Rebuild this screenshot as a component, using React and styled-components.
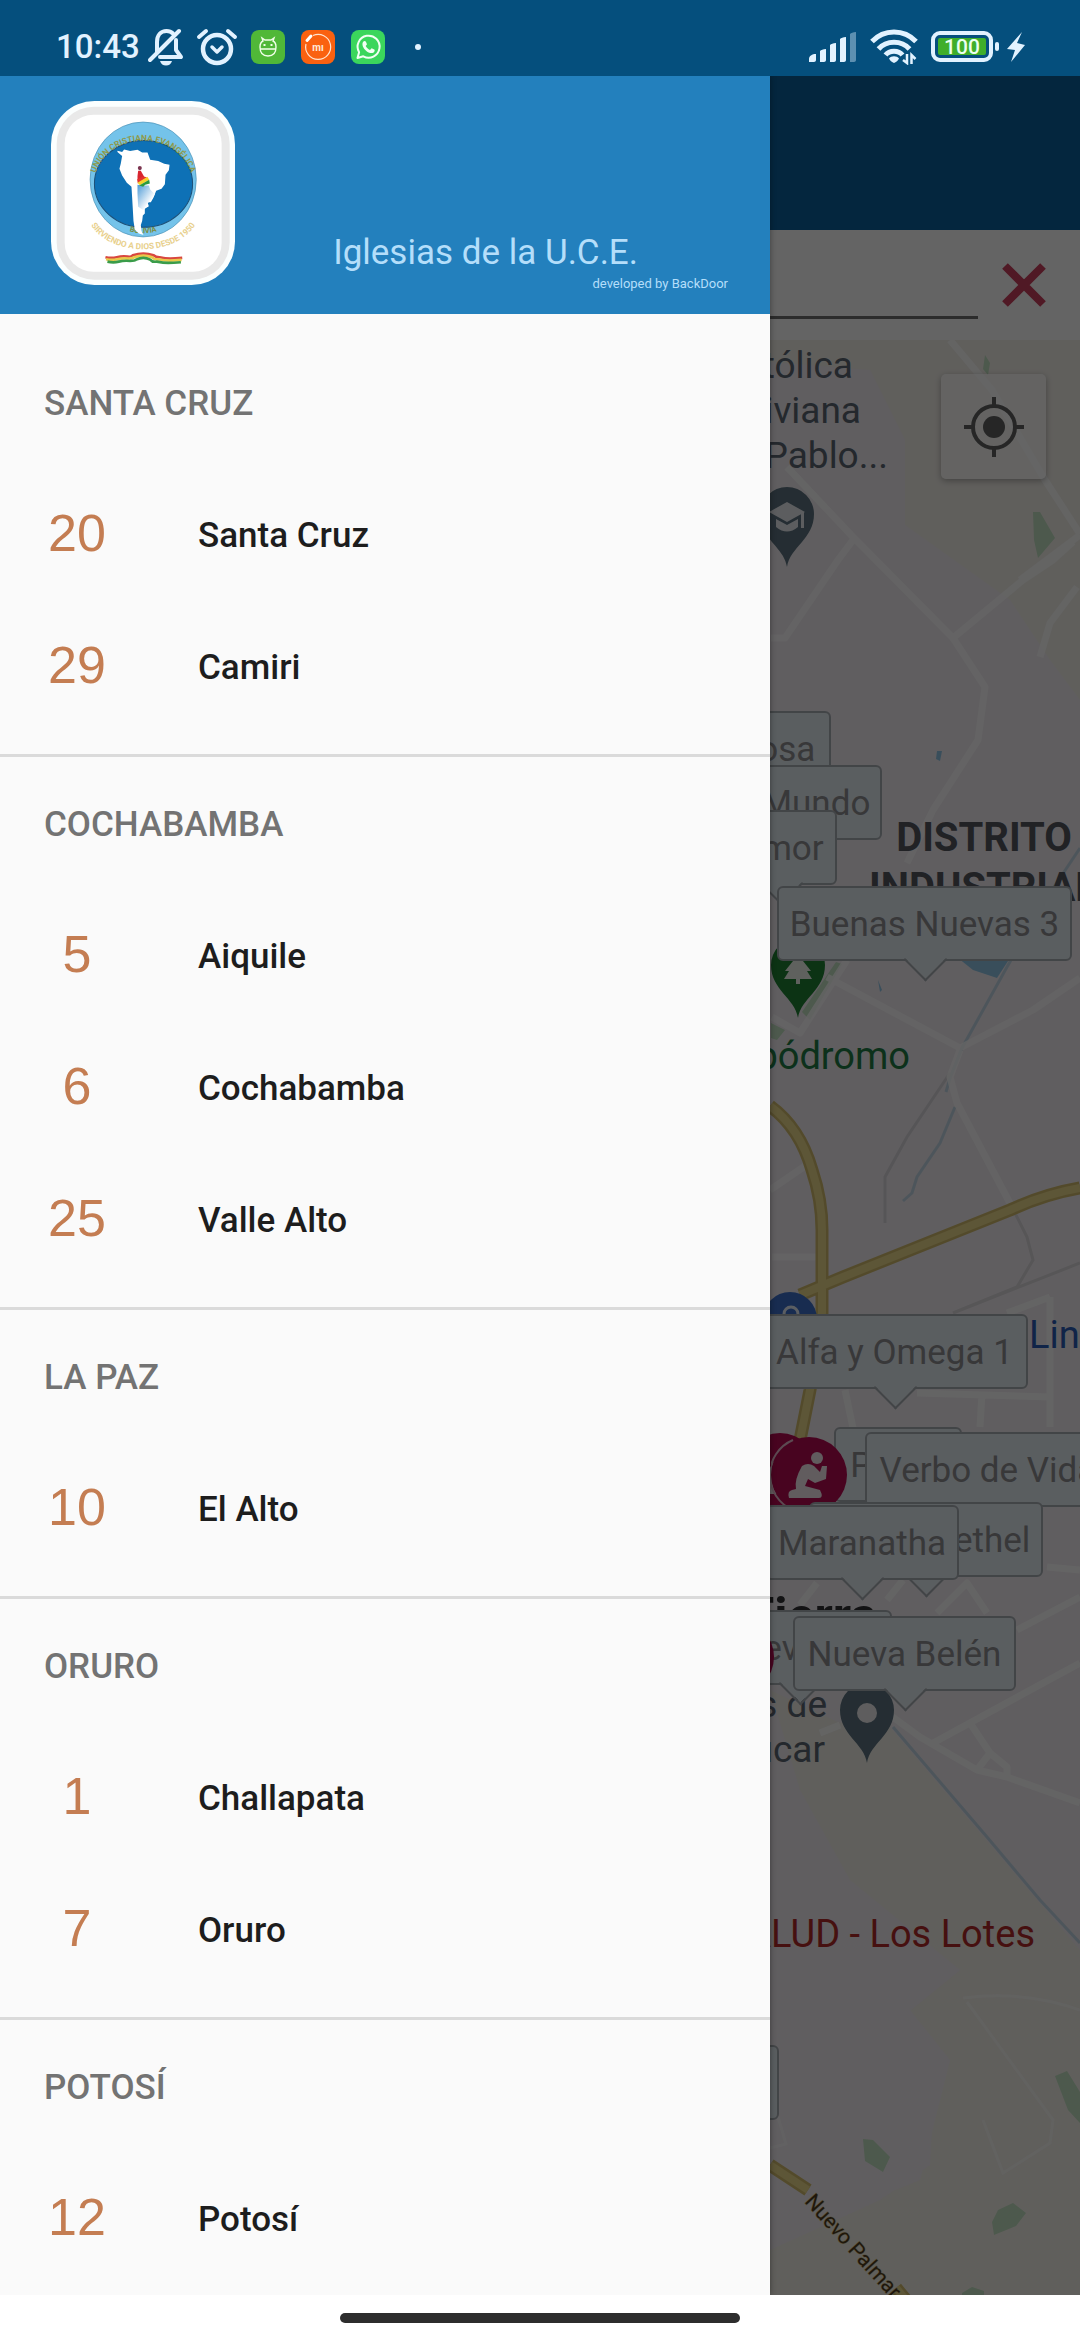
import React from "react";
import styled, { createGlobalStyle } from "styled-components";

const GlobalStyle = createGlobalStyle`
  * {
    box-sizing: border-box;
  }

  body {
    margin: 0;
    background: #ffffff;
    font-family: Roboto, "Liberation Sans", sans-serif;
  }
`;

const Screen = styled.div`
  display: flex;
  flex-direction: column;
  height: 100vh;
  overflow: hidden;
`;

/* ---------- status bar ---------- */

const StatusBar = styled.header`
  display: flex;
  justify-content: space-between;
  flex-shrink: 0;
  height: 76px;
  padding: 18px 55px 0 56px;
  background: #054f7d;
  color: #e2f2ff;
`;

const StatusGroup = styled.div`
  display: flex;
  align-items: center;
  gap: ${(props) => props.$gap}px;
`;

const Clock = styled.time`
  font-size: 33px;
  font-weight: 500;
  line-height: 40px;
`;

/* ---------- layout below the status bar ---------- */

const Stage = styled.div`
  display: grid;
  grid-template: minmax(0, 1fr) / minmax(0, 1fr);
  flex: 1;
  min-height: 0;
  overflow: hidden;

  > * {
    grid-area: 1 / 1;
  }
`;

const MapScreen = styled.main`
  display: flex;
  flex-direction: column;
  min-height: 0;
`;

const AppBar = styled.div`
  flex-shrink: 0;
  height: 154px;
  background: #0c5f9c;
`;

const SearchRow = styled.form`
  display: flex;
  align-items: center;
  flex-shrink: 0;
  gap: 18px;
  height: 110px;
  padding: 0 28px 0 44px;
  background: #fafafa;
`;

const SearchInput = styled.input`
  flex: 1;
  min-width: 0;
  height: 66px;
  padding: 0;
  border: 0;
  border-bottom: 3px solid #6e6e6e;
  margin-top: 2px;
  background: transparent;
  font: 400 40px Roboto, sans-serif;
`;

const ClearButton = styled.button`
  display: flex;
  align-items: center;
  justify-content: center;
  width: 56px;
  height: 56px;
  padding: 0;
  border: 0;
  background: transparent;
`;

const MapArea = styled.section`
  position: relative;
  flex: 1;
  min-height: 0;
  overflow: hidden;
  background: #f0ebf0;
`;

const MapDrawing = styled.svg`
  display: block;
  width: 1080px;
  height: 1955px;
  font-family: Roboto, sans-serif;
`;

const MarkerLabel = styled.div`
  position: absolute;
  left: ${(props) => props.$x}px;
  top: ${(props) => props.$y}px;
  width: ${(props) => props.$w}px;
  height: 75px;
  border: 2px solid #a6acb2;
  border-radius: 6px;
  background: #e2eaf0;
  color: #8c8c90;
  font-size: 35px;
  line-height: 74px;
  text-align: center;
  white-space: nowrap;

  &::after {
    content: "";
    position: absolute;
    left: calc(50% - 15px);
    bottom: -16px;
    width: 29px;
    height: 29px;
    border: solid #a6acb2;
    border-width: 0 2px 2px 0;
    background: linear-gradient(135deg, transparent 50%, #e2eaf0 50%);
    transform: rotate(45deg);
  }
`;

const ChurchPin = styled.svg`
  position: absolute;
  left: ${(props) => props.$x}px;
  top: ${(props) => props.$y}px;
  width: 76px;
  height: 76px;
`;

const LocateButton = styled.button`
  position: absolute;
  top: 34px;
  right: 34px;
  display: flex;
  align-items: center;
  justify-content: center;
  width: 105px;
  height: 105px;
  padding: 0;
  border: 0;
  border-radius: 5px;
  background: rgba(255, 255, 255, 0.6);
  box-shadow: 0 2px 6px rgba(0, 0, 0, 0.3);
`;

const Scrim = styled.div`
  z-index: 1;
  background: rgba(0, 0, 0, 0.6);
`;

/* ---------- drawer ---------- */

const Drawer = styled.aside`
  z-index: 2;
  display: flex;
  flex-direction: column;
  width: 770px;
  max-width: 85%;
  min-height: 0;
  background: #fafafa;
  box-shadow: 0 0 6px rgba(0, 0, 0, 0.4);
`;

const DrawerHeader = styled.div`
  display: flex;
  align-items: flex-end;
  justify-content: space-between;
  flex-shrink: 0;
  height: 238px;
  padding: 25px 42px 22px 51px;
  background: #2380bd;
`;

const Logo = styled.svg`
  align-self: flex-start;
  width: 184px;
  height: 184px;
`;

const HeaderText = styled.div`
  display: flex;
  flex-direction: column;
  gap: 3px;
`;

const Title = styled.h1`
  margin: 0 90px 0 0;
  color: #b4defa;
  font-size: 35px;
  font-weight: 400;
  line-height: 40px;
`;

const Credit = styled.p`
  margin: 0;
  color: #b4defa;
  font-size: 13px;
  line-height: 16px;
  text-align: right;
`;

const DrawerNav = styled.nav`
  flex: 1;
  min-height: 0;
  overflow-y: auto;
  scrollbar-width: none;
`;

const Section = styled.section`
  padding-bottom: 22px;

  &:first-child {
    padding-top: 22px;
  }

  & + & {
    border-top: 3px solid #dadada;
  }
`;

const SectionTitle = styled.h2`
  margin: 0;
  padding: 4px 44px 0;
  color: #737373;
  font-size: 35px;
  font-weight: 500;
  line-height: 128px;
`;

const List = styled.ul`
  margin: 0;
  padding: 0;
  list-style: none;
`;

const Item = styled.a`
  display: flex;
  align-items: center;
  gap: 88px;
  height: 132px;
  padding: 2px 44px 0;
  color: #1d1d1d;
  font-size: 35px;
  font-weight: 500;
  text-decoration: none;
`;

const Count = styled.span`
  width: 66px;
  padding-bottom: 4px;
  color: #c47d52;
  font: 400 52px/64px "Liberation Sans", sans-serif;
  text-align: center;
`;

/* ---------- bottom gesture bar ---------- */

const GestureBar = styled.footer`
  display: flex;
  align-items: center;
  justify-content: center;
  flex-shrink: 0;
  height: 45px;
  background: #ffffff;
`;

const GesturePill = styled.div`
  width: 37%;
  height: 10px;
  border-radius: 5px;
  background: #2d2d2d;
`;

const departments = [
  {
    name: "SANTA CRUZ",
    places: [
      { count: 20, name: "Santa Cruz" },
      { count: 29, name: "Camiri" },
    ],
  },
  {
    name: "COCHABAMBA",
    places: [
      { count: 5, name: "Aiquile" },
      { count: 6, name: "Cochabamba" },
      { count: 25, name: "Valle Alto" },
    ],
  },
  { name: "LA PAZ", places: [{ count: 10, name: "El Alto" }] },
  {
    name: "ORURO",
    places: [
      { count: 1, name: "Challapata" },
      { count: 7, name: "Oruro" },
    ],
  },
  { name: "POTOSÍ", places: [{ count: 12, name: "Potosí" }] },
];

// x, y and w are in map pixels; later entries lie on top
const backMarkers = [
  { name: "Rosa", x: 721, y: 371, w: 110 },
  { name: "Luz del Mundo", x: 631, y: 425, w: 251 },
  { name: "Amor", x: 725, y: 470, w: 112 },
  { name: "Peniel", x: 834, y: 1087, w: 128 },
  { name: "Nueva Luz", x: 708, y: 1270, w: 184 },
  { name: "Sion", x: 677, y: 1705, w: 102 },
];

const pins = [
  { id: "pin-south", x: 698, y: 1279 },
  { id: "pin-west", x: 742, y: 1093 },
  { id: "pin-east", x: 771, y: 1097 },
];

const frontMarkers = [
  { name: "Buenas Nuevas 3", x: 777, y: 546, w: 295 },
  { name: "Alfa y Omega 1", x: 761, y: 974, w: 267 },
  { name: "Verbo de Vida", x: 865, y: 1092, w: 246 },
  { name: "Iglesia Bethel", x: 809, y: 1162, w: 234 },
  { name: "Maranatha", x: 765, y: 1165, w: 194 },
  { name: "Nueva Belén", x: 793, y: 1276, w: 223 },
];

const BellOffIcon = () => (
  <svg width="36" height="38" viewBox="0 0 36 38" fill="none" stroke="currentColor" strokeWidth="4">
    <path d="M9 24V14C9 7 13 3 18.500 3c3 0 5 1 6.500 2.500M28 12v10l5 7H12" strokeLinejoin="round" strokeLinecap="round" />
    <path d="M2 32 31 3" strokeLinecap="round" />
    <path d="M12 33h12c-1 3-3 4.500-6 4.500S13 36 12 33z" fill="currentColor" stroke="none" />
  </svg>
);

const AlarmIcon = () => (
  <svg width="42" height="38" viewBox="0 0 42 38" fill="none" stroke="currentColor" strokeLinecap="round">
    <circle cx="21" cy="21" r="14" strokeWidth="4.500" />
    <path d="M16 19l5 5 5-5" strokeWidth="3.500" strokeLinejoin="round" />
    <path d="M3 9l7-6M39 9l-7-6" strokeWidth="4" />
  </svg>
);

const BugAppIcon = () => (
  <svg width="34" height="34" viewBox="0 0 34 34">
    <rect width="34" height="34" rx="8" fill="#50b838" />
    <g fill="none" stroke="#f0ffe8" strokeWidth="1.400">
      <path d="M9 17c0-3 1-5 3-6l-1-3 3 2h6l3-2-1 3c2 1 3 3 3 6 0 6-3 9-8 9s-8-3-8-9zM9 19h16" />
      <path d="M13.500 14v2M20.500 14v2" strokeWidth="2" />
    </g>
  </svg>
);

const MiAppIcon = () => (
  <svg width="34" height="34" viewBox="0 0 34 34">
    <rect width="34" height="34" rx="8" fill="#fa6110" />
    <path d="M12 5.500A12.500 12.500 0 1 1 5 14" fill="none" stroke="#ffe3cf" strokeWidth="1.200" />
    <path d="M6 10.500l4-4.500" stroke="#ffffff" strokeWidth="3" strokeLinecap="round" />
    <text x="17" y="20.500" fill="#ffe9d8" fontFamily="Roboto, sans-serif" fontSize="10" fontWeight="700" textAnchor="middle">
      mı
    </text>
  </svg>
);

const ChatAppIcon = () => (
  <svg width="34" height="34" viewBox="0 0 34 34">
    <rect width="34" height="34" rx="8" fill="#3bd65c" />
    <path d="M6.500 28l1.600-5.800A11 11 0 1 1 12.300 26.300z" fill="none" stroke="#f2fff4" strokeWidth="2" strokeLinejoin="round" />
    <path d="M12 12c1-1.500 2.500-1.500 3 0l1 2.200-1.300 1.800c1 1.800 2.300 3 4.300 3.900l1.600-1.700 2.700 1.300c.8.500.3 2.500-1 3.200-2 1-5 .2-7.500-2.200-2.800-2.600-4.200-6-2.800-8.500z" fill="#f2fff4" />
  </svg>
);

const SignalIcon = () => (
  <svg width="48" height="32" viewBox="0 0 48 32" fill="currentColor">
    <path d="M0 31v-3c0-3 3-5 7-5v6c0 1-1 2-2 2zM11 20c1-1 3-2 6-2v11c0 1-1 2-2 2h-4zM21 14c1-1 3-2 6-2v17c0 1-1 2-2 2h-4zM31 8c1-1 3-2 6-2v23c0 1-1 2-2 2h-4z" />
    <path d="M41 3c1-1 3-2 6-2v28c0 1-1 2-2 2h-4z" opacity="0.4" />
  </svg>
);

const WifiIcon = () => (
  <svg width="48" height="36" viewBox="0 0 48 36" fill="none" stroke="currentColor" strokeWidth="5">
    <path d="M2 12.500C14-.2 34-.2 46 12.500M8.500 20c8-9 23-9 31 0M15.500 26c4-5 13-5 17 0" />
    <path d="M24 34c-3-1-4-3-5-4.500 2-3 8-3 10 0-1 1.500-2 3.500-5 4.500z" fill="currentColor" stroke="none" />
    <path d="M37 25v9l-4-3M41.500 35v-9l4 4" strokeWidth="2.500" />
  </svg>
);

const BatteryIcon = () => (
  <svg width="70" height="32" viewBox="0 0 70 32">
    <rect x="2" y="2" width="58" height="27" rx="7" fill="none" stroke="currentColor" strokeWidth="4" />
    <rect x="7" y="7" width="48" height="17" rx="2" fill="#3fae2a" />
    <rect x="64" y="11" width="4" height="9" rx="2" fill="currentColor" />
    <text x="31" y="23" fill="#eafff0" fontFamily="Roboto, sans-serif" fontSize="21" fontWeight="500" textAnchor="middle">
      100
    </text>
  </svg>
);

const BoltIcon = () => (
  <svg width="18" height="30" viewBox="0 0 18 30" fill="currentColor">
    <path d="M15 0L0 17l8 1L4 30 18 13l-8-2z" />
  </svg>
);

const ChurchLogo = () => (
  <Logo viewBox="33 33 551 551" role="img" aria-label="Unión Cristiana Evangélica">
    <defs>
      <linearGradient id="southFade" x1="0" y1="0" x2="1" y2="1">
        <stop offset="0" stopColor="#4d9ad6" />
        <stop offset="0.700" stopColor="#ffffff" />
      </linearGradient>
      <path id="arcTop" d="M166 250A148 132 0 0 1 452 250" />
      <path id="arcBolivia" d="M240 412Q309 446 378 412" />
      <path id="arcMotto" d="M136 366C172 514 446 514 482 366" />
    </defs>
    <rect x="33" y="33" width="551" height="551" rx="130" fill="#fbffff" />
    <rect x="50" y="50" width="518" height="518" rx="112" fill="#e9e9e9" />
    <rect x="74" y="74" width="470" height="470" rx="86" fill="#ffffff" />
    <ellipse cx="309" cy="268" rx="159" ry="172" fill="#74c3ea" stroke="#4a8fb4" strokeWidth="2" />
    <ellipse cx="310" cy="281" rx="147" ry="130" fill="#0e71b6" stroke="#1c4f77" strokeWidth="3" />
    <g fontFamily="Roboto, sans-serif" fontWeight="700">
      <text fill="#8f9a4c" fontSize="25">
        <textPath href="#arcTop" startOffset="50%" textAnchor="middle">
          UNIÓN CRISTIANA EVANGÉLICA
        </textPath>
      </text>
      <text fill="#7d8c3c" fontSize="22">
        <textPath href="#arcBolivia" startOffset="50%" textAnchor="middle">
          BOLIVIA
        </textPath>
      </text>
      <text fill="#e8d08c" fontSize="25">
        <textPath href="#arcMotto" startOffset="50%" textAnchor="middle">
          SIRVIENDO A DIOS DESDE 1950
        </textPath>
      </text>
    </g>
    <path
      d="M232 182l14 4 6-8 18 5 22-4 14 8 16 0 8 22 24 4 18 8 16 3-2 16-10 14-2 28-10 14-16 6-8 20-8 14-10 0 4 12-12 8 0 14-6 6-2 16-4 12 2 18 6 12-14-4-12-12-4-26-4-70-2-32-14-12-14-22-8-20 4-16 4-22-14-12z"
      fill="#ffffff"
    />
    <path d="M292 284l14 2 20 0 4 12 14 14-8 14-14 14-12 20-16-10-2-40z" fill="url(#southFade)" />
    <path d="M294 242l8 0 10 18-6 10-14 0 0-12z" fill="#d8252f" />
    <circle cx="299" cy="234" r="6" fill="#7c3550" />
    <path d="M291 268l18-10 12 4-28 18z" fill="#e2342d" />
    <path d="M292 278l30-18 5 9-28 16z" fill="#f6d12c" />
    <path d="M297 286l30-17 2 11-14 4-6 6z" fill="#2c9a3f" />
    <g fill="none" strokeWidth="8">
      <path d="M196 501q18 4 34 0t32-2q12 2 16-4 32-10 62 0 6 6 18 6 18 4 32 4t36-2" stroke="#d9473f" />
      <path d="M198 507q18 4 34 0t32-2q14 0 18-4 28-10 54 0 6 8 18 6 20 4 34 4t36-2" stroke="#e8c94a" />
      <path d="M202 514q18 4 34 0t34-2q14 0 18-4 22-10 42 0 6 8 20 6 20 4 34 4t38-2" stroke="#3a9c4a" />
    </g>
  </Logo>
);

const PIN = "M0 0C-3-20-27-28-27-53A27 27 0 1 1 27-53C27-28 3-20 0 0z";

const CityMap = () => (
  <MapDrawing viewBox="0 340 1080 1955" aria-hidden="true">
    {/* open land */}
    <g fill="#f0ede7">
      <path d="M770 340H1080V700L1050 660 1010 600 905 525 905 440 870 370 770 362z" />
      <path d="M770 1690L838 1722 890 1727 1080 1950V2295H770V2240L920 2180 950 2060 910 2010 960 1970 850 1880 800 1790z" />
    </g>
    <path d="M770 1850L840 1900 960 1970 905 2015 935 2070 930 2165 880 2200 770 2250z" fill="#f0ebf0" />

    {/* parks */}
    <g fill="#c0dfc0">
      <path d="M985 355l5 8-2 12-5-6zM1033 512l7 0 15 26-17 20-4-18zM863 2139l10 1 17 17-7 15-18-11zM992 2222l6-12 15-7 13 10-10 13-22 9zM1055 2076l12-5 13 21v31l-12-13zM962 2293l10-6 12 4v4h-22z" />
      <path d="M836 962l6 2-32 56-8-8zM771 1023l14 7-8 10-6-2z" />
    </g>

    {/* water */}
    <path d="M958 958h52l-13 20-24-8z" fill="#8fc4e4" />
    <path d="M937 751h5l-2 10-4-2zM878 980l4 10-2 2z" fill="#8fc4e4" />
    <g fill="none" stroke="#a2c6dc" strokeWidth="3" opacity="0.600">
      <path d="M1080 848l-30 45-43 74-45 81-12 30-4 14M955 1107l-15 36-23 34-5 16-9 8" />
      <path d="M893 1727l94 110 53 63 40 43" />
    </g>
    <path d="M950 1073l-43 64-22 40 0 46" fill="none" stroke="#d7d5da" strokeWidth="3" />

    {/* streets */}
    <g fill="none" stroke="#fcfcfc" strokeWidth="7" strokeLinejoin="round" opacity="0.800">
      <path d="M950 340l42 50 53 90 35 54M1020 580l60-45M787 467l66 70 100 101 70-58 30-20 20-18M853 540l-15 20-53 78-14 0" />
      <path d="M953 638l32 49-7 53-45 70-26 53M1077 587l-27 36-10 34" />
      <path d="M847 960l-47 73-28-16M827 977l133 71 73-38 47-32M960 1050l-10 27 7 26 55 104" />
      <path d="M770 1190l35-24M772 1257h46M845 1390l8 38M917 1393l133 4M1050 1297v130M982 1393l-2 34M1007 1313l43-16" />
      <path d="M1047 1567l33 3M937 1613l30-30 20 30M887 1600l16-20M1017 1630l63-33M1080 1663l-147 80M890 1715l30 22 57 33 30 7 73 26M970 1723l20 30-13 17M990 1753l17 14v10M800 1605l17-22M820 1733l20-8" />
    </g>
    <g fill="none" stroke="#fcfcfc" strokeWidth="3" opacity="0.500">
      <path d="M963 1998q60-8 117 12M967 2002l86 118-3 23-47 30-20-53M770 2148l16-4-10-34" />
    </g>
    <path d="M1012 1207l15 30 6 23-16 27-64 26 127-50" fill="none" stroke="#d9d6da" strokeWidth="3" />

    {/* highways */}
    <g fill="none" strokeLinejoin="round">
      <path d="M770 1106q30 22 42 64 10 30 10 60v83l-12 77-10 50M800 1295l43-18 167-67q35-16 70-22M770 2165l38 25M896 2288l10 12" stroke="#cfba6c" strokeWidth="13" />
      <path d="M770 1106q30 22 42 64 10 30 10 60v83l-12 77-10 50M800 1295l43-18 167-67q35-16 70-22M770 2165l38 25M896 2288l10 12" stroke="#e8d68a" strokeWidth="8" />
    </g>

    {/* place names */}
    <g fontSize="37" fill="#5a6570">
      <text x="853" y="378" textAnchor="end">Católica</text>
      <text x="861" y="423" textAnchor="end">Boliviana</text>
      <text x="888" y="468" textAnchor="end">San Pablo...</text>
      <text x="827" y="1717" textAnchor="end">Campos de</text>
      <text x="825" y="1762" textAnchor="end">Azúcar</text>
    </g>
    <g fontSize="40" fontWeight="700" fill="#53565e" textAnchor="middle">
      <text x="984" y="851">DISTRITO</text>
      <text x="983" y="901">INDUSTRIAL</text>
    </g>
    <text x="877" y="1633" fontSize="50" fontWeight="700" fill="#303034" textAnchor="end">Tierra</text>
    <text x="910" y="1069" fontSize="38" fill="#1f7a45" textAnchor="end">Hipódromo</text>
    <text x="1029" y="1348" fontSize="38" fill="#2a5bb4">Lincoln</text>
    <text x="1035" y="1947" fontSize="38" fill="#b02a28" textAnchor="end">SALUD - Los Lotes</text>
    <text transform="translate(804 2202) rotate(48)" fontSize="21" fill="#4e3a1c" stroke="#dccf96" strokeWidth="1" paintOrder="stroke">
      Nuevo Palmar
    </text>

    {/* points of interest */}
    <g transform="translate(787 567)">
      <path d={PIN} fill="#5c727f" />
      <path d="M-18-55L0-65 18-55 0-45z" fill="#e6e8ee" />
      <path d="M-11-48v8q11 9 22 0v-8L0-42zM14-55h3v16h-3z" fill="#e6e8ee" />
    </g>
    <g transform="translate(798 1018)">
      <path d={PIN} fill="#1f7f34" />
      <path d="M0-70l9 13h-4l8 10h-4l5 8H2v5h-4v-5h-12l5-8h-4l8-10h-4z" fill="#eef3ea" />
    </g>
    <g transform="translate(867 1763)">
      <path d={PIN} fill="#5c727f" />
      <circle cx="0" cy="-50" r="10" fill="#ece9ec" />
    </g>
    <circle cx="790" cy="1319" r="27" fill="#3c6fc8" />
    <path d="M784 1318v-4a7 7 0 0 1 14 0v4" fill="none" stroke="#e3eaf6" strokeWidth="3" />
  </MapDrawing>
);

const Label = ({ marker }) => (
  <MarkerLabel $x={marker.x} $y={marker.y} $w={marker.w}>
    {marker.name}
  </MarkerLabel>
);

const App = () => {
  return (
    <>
      <GlobalStyle />
      <Screen>
        <StatusBar>
          <StatusGroup $gap={13}>
            <StatusGroup $gap={8}>
              <Clock>10:43</Clock>
              <StatusGroup $gap={12}>
                <BellOffIcon />
                <AlarmIcon />
              </StatusGroup>
            </StatusGroup>
            <StatusGroup $gap={30}>
              <StatusGroup $gap={16}>
                <BugAppIcon />
                <MiAppIcon />
                <ChatAppIcon />
              </StatusGroup>
              <svg width="6" height="6" viewBox="0 0 6 6" fill="currentColor">
                <circle cx="3" cy="3" r="3" />
              </svg>
            </StatusGroup>
          </StatusGroup>
          <StatusGroup $gap={13}>
            <SignalIcon />
            <WifiIcon />
            <StatusGroup $gap={6}>
              <BatteryIcon />
              <BoltIcon />
            </StatusGroup>
          </StatusGroup>
        </StatusBar>

        <Stage>
          <MapScreen>
            <AppBar />
            <SearchRow>
              <SearchInput type="text" aria-label="Buscar" />
              <ClearButton type="button" aria-label="Borrar">
                <svg width="44" height="44" viewBox="0 0 44 44" stroke="#c8405c" strokeWidth="8">
                  <path d="M3 3l38 38M41 3L3 41" />
                </svg>
              </ClearButton>
            </SearchRow>
            <MapArea>
              <CityMap />
              {backMarkers.map((marker) => (
                <Label key={marker.name} marker={marker} />
              ))}
              {pins.map((pin) => (
                <ChurchPin key={pin.id} $x={pin.x} $y={pin.y} viewBox="0 0 76 76">
                  <circle cx="38" cy="38" r="38" fill="#b50a52" />
                  <path d="M22 3a38 38 0 0 0 0 70" fill="none" stroke="#e6b9cb" strokeWidth="2" />
                  <g fill="#f2e6ec">
                    <circle cx="46" cy="21" r="6" />
                    <path d="M31 29q6-4 12 0l6 6 2-6 5 0-1 13-11 4-7-4-3 7 15 4q4 8-1 8h-30q-2-7 3-8l4-1q-2-9 6-23z" />
                  </g>
                </ChurchPin>
              ))}
              {frontMarkers.map((marker) => (
                <Label key={marker.name} marker={marker} />
              ))}
              <LocateButton type="button" aria-label="Mi ubicación">
                <svg width="60" height="60" viewBox="0 0 60 60" fill="none" stroke="#606060" strokeWidth="4">
                  <circle cx="30" cy="30" r="21" />
                  <circle cx="30" cy="30" r="11" fill="#606060" stroke="none" />
                  <path d="M30 0v10M30 50v10M0 30h10M50 30h10" />
                </svg>
              </LocateButton>
            </MapArea>
          </MapScreen>

          <Scrim />

          <Drawer>
            <DrawerHeader>
              <ChurchLogo />
              <HeaderText>
                <Title>Iglesias de la U.C.E.</Title>
                <Credit>developed by BackDoor</Credit>
              </HeaderText>
            </DrawerHeader>
            <DrawerNav>
              {departments.map((department) => (
                <Section key={department.name}>
                  <SectionTitle>{department.name}</SectionTitle>
                  <List>
                    {department.places.map((place) => (
                      <li key={place.name}>
                        <Item href="#">
                          <Count>{place.count}</Count>
                          {place.name}
                        </Item>
                      </li>
                    ))}
                  </List>
                </Section>
              ))}
            </DrawerNav>
          </Drawer>
        </Stage>

        <GestureBar>
          <GesturePill />
        </GestureBar>
      </Screen>
    </>
  );
};

export default App;
